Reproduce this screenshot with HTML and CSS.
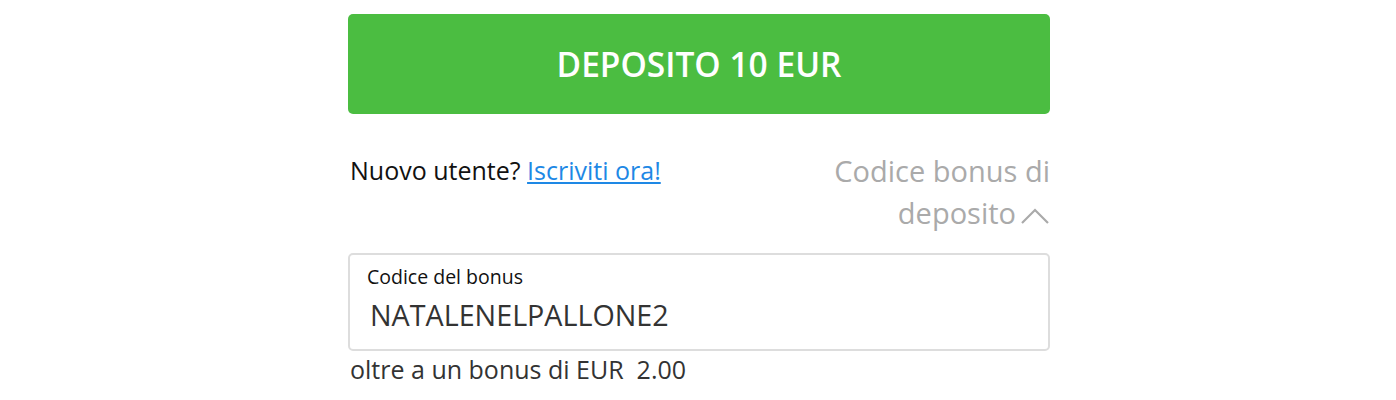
FILE: index.html
```html
<!DOCTYPE html>
<html lang="it">
<head>
<meta charset="utf-8">
<link rel="stylesheet" href="styles.css">
</head>
<body>
<div class="wrap">
  <button class="deposit">DEPOSITO 10 EUR</button>
  <div class="row">
    <div class="new-user">Nuovo utente? <a href="#" class="link">Iscriviti ora!</a></div>
    <div class="bonus-toggle">Codice bonus di deposito<svg class="chev" width="30" height="18" viewBox="0 0 30 18"><path d="M2 16 L15 3 L28 16" fill="none" stroke="#aaaaaa" stroke-width="2.2"/></svg></div>
  </div>
  <div class="field">
    <div class="label">Codice del bonus</div>
    <div class="value">NATALENELPALLONE2</div>
  </div>
  <div class="note">oltre a un bonus di EUR&nbsp; 2.00</div>
</div>
</body>
</html>
```
FILE: styles.css
```css
html, body { margin: 0; padding: 0; background: #fff; }
body { font-family: "Open Sans", "Noto Sans", sans-serif; }
.wrap { width: 702px; margin: 0 auto; padding-top: 14px; transform: translateX(1px); }
.deposit {
  display: block; width: 100%; height: 100px; border: 0; border-radius: 5px;
  background: #4bbd41; color: #fff; font-family: inherit; font-size: 33.5px; font-weight: 600;
  padding: 0;
}
.row { display: flex; justify-content: space-between; align-items: flex-start; margin-top: 36px; }
.new-user { font-size: 25px; color: #111; line-height: 42px; padding-left: 2px; margin-top: -1px; }
.link { color: #1e88e5; text-decoration: underline; }
.bonus-toggle { width: 230px; text-align: right; font-size: 29px; color: #aaaaaa; line-height: 42px; }
.chev { margin-left: 4px; vertical-align: -1px; }
.field {
  margin-top: 19px; height: 98px; box-sizing: border-box; border: 2px solid #dddddd; border-radius: 5px;
  padding: 10px 18px 0 17px;
}
.label { font-size: 19.5px; color: #111; line-height: 24px; }
.value { font-size: 28.7px; color: #333; margin-top: 8px; padding-left: 3px; line-height: 36px; }
.note { font-size: 25px; color: #333; line-height: 36px; margin-top: 0; padding-left: 2px; }
```
